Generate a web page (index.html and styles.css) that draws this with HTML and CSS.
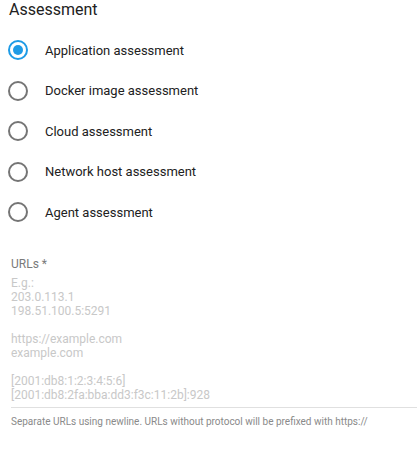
FILE: index.html
```html
<!DOCTYPE html>
<html lang="en">
<head>
    <meta charset="UTF-8">
    <meta name="viewport" content="width=device-width, initial-scale=1.0">
    <title>Assessment</title>
    <link rel="stylesheet" href="styles.css">
</head>
<body>

    <div class="form">
        <h2 class="section-title">Assessment</h2>

        <!-- Assessment type -->
        <div class="radio-group">
            <label class="radio-row">
                <span class="radio checked">
                    <svg viewBox="0 0 24 24" width="24" height="24"><circle cx="12" cy="12" r="9" fill="none" stroke="currentColor" stroke-width="2"/><circle cx="12" cy="12" r="5" fill="currentColor"/></svg>
                </span>
                <span class="radio-label">Application assessment</span>
            </label>
            <label class="radio-row">
                <span class="radio">
                    <svg viewBox="0 0 24 24" width="24" height="24"><circle cx="12" cy="12" r="9" fill="none" stroke="currentColor" stroke-width="2"/></svg>
                </span>
                <span class="radio-label">Docker image assessment</span>
            </label>
            <label class="radio-row">
                <span class="radio">
                    <svg viewBox="0 0 24 24" width="24" height="24"><circle cx="12" cy="12" r="9" fill="none" stroke="currentColor" stroke-width="2"/></svg>
                </span>
                <span class="radio-label">Cloud assessment</span>
            </label>
            <label class="radio-row">
                <span class="radio">
                    <svg viewBox="0 0 24 24" width="24" height="24"><circle cx="12" cy="12" r="9" fill="none" stroke="currentColor" stroke-width="2"/></svg>
                </span>
                <span class="radio-label">Network host assessment</span>
            </label>
            <label class="radio-row">
                <span class="radio">
                    <svg viewBox="0 0 24 24" width="24" height="24"><circle cx="12" cy="12" r="9" fill="none" stroke="currentColor" stroke-width="2"/></svg>
                </span>
                <span class="radio-label">Agent assessment</span>
            </label>
        </div>

        <!-- URLs field -->
        <div class="field">
            <label class="field-label">URLs *</label>
            <div class="field-input">
                <div class="placeholder">E.g.:
203.0.113.1
198.51.100.5:5291

https://example.com
example.com

[2001:db8:1:2:3:4:5:6]
[2001:db8:2fa:bba:dd3:f3c:11:2b]:928</div>
            </div>
            <p class="helper">Separate URLs using newline. URLs without protocol will be prefixed with https://</p>
        </div>
    </div>

</body>
</html>
```

FILE: styles.css
```css
body {
    font-family: Roboto, "Liberation Sans", sans-serif;
    margin: 0;
    padding: 0;
    background-color: #fff;
    color: #212121;
}

.form {
    padding: 0 0 0 9px;
}

.section-title {
    margin: 0;
    font-size: 16px;
    font-weight: 400;
    line-height: 20px;
    color: #212121;
}

.radio-group {
    display: flex;
    flex-direction: column;
    margin-top: 10px;
}

.radio-row {
    display: flex;
    align-items: center;
    height: 40.5px;
    cursor: pointer;
}

.radio {
    display: flex;
    width: 24px;
    height: 24px;
    margin-left: -3px;
    color: #757575;
}

.radio.checked {
    color: #1e9be6;
}

.radio-label {
    margin-left: 15px;
    font-size: 13px;
    color: #212121;
}

/* URLs text field */
.field {
    margin-top: 24px;
    padding-left: 2px;
}

.field-label {
    display: block;
    font-size: 12px;
    line-height: 14px;
    color: #7a7a7a;
}

.field-input {
    margin-top: 5px;
    padding-bottom: 5px;
    border-bottom: 1px solid #e0e0e0;
}

.placeholder {
    white-space: pre-line;
    font-size: 12px;
    line-height: 14px;
    color: #c8c8c8;
}

.helper {
    margin: 8px 0 0;
    font-size: 10px;
    color: #8a8a8a;
}
```
